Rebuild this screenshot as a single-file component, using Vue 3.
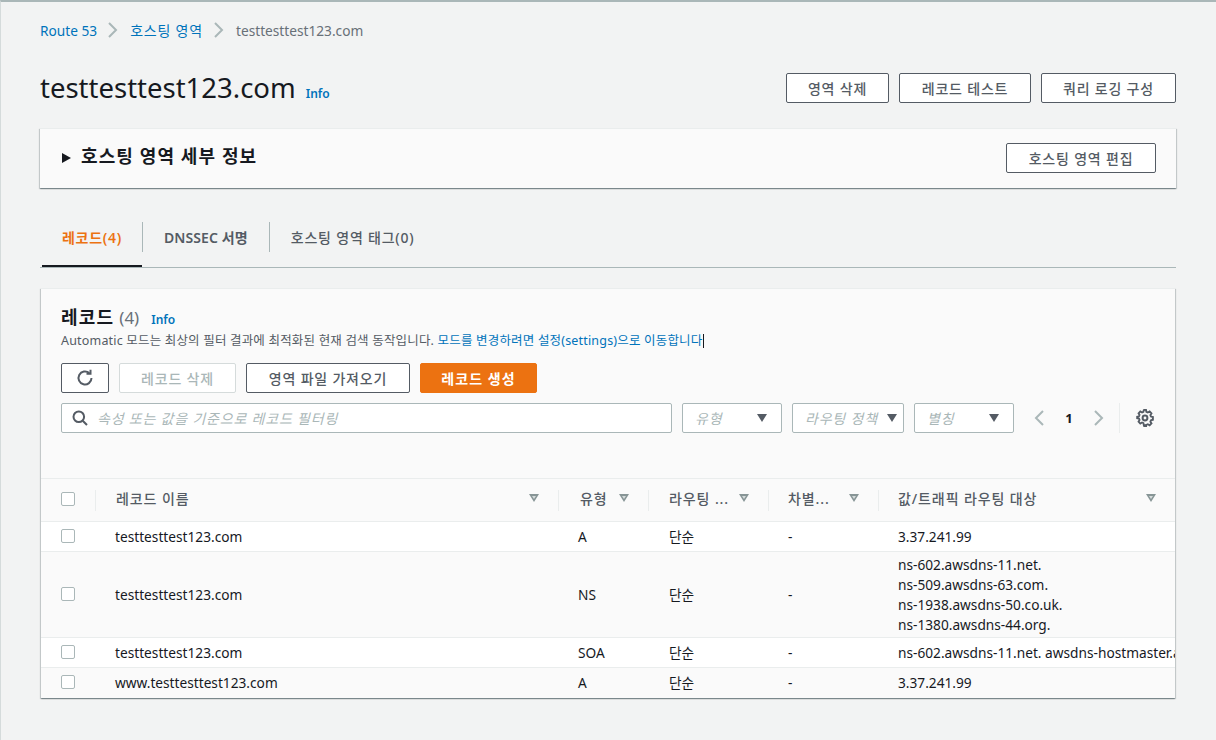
<template>
  <div class="page">
    <!-- breadcrumb -->
    <nav class="crumbs">
      <a>Route 53</a>
      <svg class="crumb-sep" width="12" height="16" viewBox="0 0 12 16"><path d="M2 1l7 7-7 7" /></svg>
      <a class="kr">호스팅 영역</a>
      <svg class="crumb-sep" width="12" height="16" viewBox="0 0 12 16"><path d="M2 1l7 7-7 7" /></svg>
      <span>testtesttest123.com</span>
    </nav>

    <!-- title and top actions -->
    <header class="head">
      <div class="head-title">
        <h1>testtesttest123.com</h1>
        <a class="info">Info</a>
      </div>
      <div class="head-actions">
        <button class="btn w-103">영역 삭제</button>
        <button class="btn w-132">레코드 테스트</button>
        <button class="btn w-135">쿼리 로깅 구성</button>
      </div>
    </header>

    <section class="details">
      <div class="details-title">
        <span class="caret"></span>
        <h2>호스팅 영역 세부 정보</h2>
      </div>
      <button class="btn w-150">호스팅 영역 편집</button>
    </section>

    <!-- tabs -->
    <div class="tabs">
      <div v-for="(tab, i) in tabs" :key="tab" class="tab" :class="{ active: i === 0 }">
        <span class="tab-label">{{ tab }}</span>
      </div>
    </div>

    <!-- records -->
    <section class="records">
      <div class="records-head">
        <div class="records-title">
          <h2>레코드</h2>
          <span class="count">(4)</span>
          <a class="info">Info</a>
        </div>
        <p class="hint">
          Automatic 모드는 최상의 필터 결과에 최적화된 현재 검색 동작입니다.
          <a>모드를 변경하려면 설정(settings)으로 이동합니다</a><span class="cursor"></span>
        </p>
        <div class="toolbar">
          <button class="btn icon-btn" aria-label="refresh">
            <svg width="18" height="18" viewBox="0 0 18 18"><path d="M15.5 9a6.5 6.5 0 1 1-2.2-4.9" /><path d="M14.5 0.8v4h-4" /></svg>
          </button>
          <button class="btn disabled w-117">레코드 삭제</button>
          <button class="btn w-164">영역 파일 가져오기</button>
          <button class="btn primary w-117">레코드 생성</button>
        </div>
        <div class="filters">
          <div class="search">
            <svg width="16" height="16" viewBox="0 0 16 16"><circle cx="6.8" cy="6.8" r="5.3" /><path d="M10.7 10.7L15 15" /></svg>
            <span>속성 또는 값을 기준으로 레코드 필터링</span>
          </div>
          <div v-for="s in selects" :key="s.label" class="select" :class="s.cls">
            <span>{{ s.label }}</span><i class="down"></i>
          </div>
          <div class="pager">
            <svg width="12" height="16" viewBox="0 0 12 16"><path d="M10 1L3 8l7 7" /></svg>
            <b>1</b>
            <svg width="12" height="16" viewBox="0 0 12 16"><path d="M2 1l7 7-7 7" /></svg>
          </div>
          <div class="prefs">
            <svg width="18" height="18" viewBox="0 0 18 18">
              <circle cx="9" cy="9" r="2.4" />
              <path d="M7.6 1.5h2.8l.4 2.1 1.5.7 1.9-1.1 1.9 2-1.1 1.8.6 1.5 2 .5v2.8l-2 .5-.6 1.5 1.1 1.8-1.9 2-1.9-1.1-1.5.7-.4 2.1H7.6" transform="translate(0 -.6) scale(.96)" />
              <path d="M10.4 16.5H7.6l-.4-2.1-1.5-.7-1.9 1.1-1.9-2 1.1-1.8-.6-1.5-2-.5V7.5l2-.5.6-1.5-1.1-1.8 1.9-2 1.9 1.1 1.5-.7.4-2.1" transform="translate(.8 .9) scale(.92)" />
            </svg>
          </div>
        </div>
      </div>

      <table class="grid">
        <colgroup>
          <col style="width: 55px" />
          <col style="width: 462px" />
          <col style="width: 90px" />
          <col style="width: 120px" />
          <col style="width: 110px" />
          <col />
        </colgroup>
        <thead>
          <tr>
            <th><span class="check"></span></th>
            <th v-for="c in columns" :key="c">
              <div class="th-in"><span>{{ c }}</span><i class="sort"></i></div>
            </th>
          </tr>
        </thead>
        <tbody>
          <tr v-for="(r, i) in rows" :key="i">
            <td><span class="check"></span></td>
            <td class="name">{{ r.name }}</td>
            <td>{{ r.type }}</td>
            <td class="route">단순</td>
            <td>-</td>
            <td class="value"><div class="value-list"><div v-for="v in r.values" :key="v">{{ v }}</div></div></td>
          </tr>
        </tbody>
      </table>
    </section>
  </div>
</template>

<script setup>
const tabs = ['레코드(4)', 'DNSSEC 서명', '호스팅 영역 태그(0)']

const selects = [
  { label: '유형', cls: 'sel-100' },
  { label: '라우팅 정책', cls: 'sel-112' },
  { label: '별칭', cls: 'sel-100' }
]

const columns = ['레코드 이름', '유형', '라우팅 ...', '차별...', '값/트래픽 라우팅 대상']

const rows = [
  { name: 'testtesttest123.com', type: 'A', values: ['3.37.241.99'] },
  {
    name: 'testtesttest123.com',
    type: 'NS',
    values: ['ns-602.awsdns-11.net.', 'ns-509.awsdns-63.com.', 'ns-1938.awsdns-50.co.uk.', 'ns-1380.awsdns-44.org.']
  },
  { name: 'testtesttest123.com', type: 'SOA', values: ['ns-602.awsdns-11.net. awsdns-hostmaster.amazon.com. 1 7200 900'] },
  { name: 'www.testtesttest123.com', type: 'A', values: ['3.37.241.99'] }
]
</script>

<style>
html, body {
  margin: 0;
  background: #f2f3f3;
}
</style>

<style scoped>
.page {
  box-sizing: border-box;
  width: 1216px;
  height: 740px;
  overflow: hidden;
  padding: 0 40px;
  background: #f2f3f3;
  border-top: 2px solid #aab7b8;
  border-left: 1px solid #d5dbdb;
  font-family: "Noto Sans", "Noto Sans CJK KR", sans-serif;
  font-size: 13.7px;
  color: #16191f;
}

h1, h2, p {
  margin: 0;
}

a {
  color: #0073bb;
}

.kr {
  font-size: 14px;
  letter-spacing: 0.8px;
}

.crumbs {
  display: flex;
  align-items: center;
  height: 20px;
  margin: 18px 0 0 -1px;
  color: #687078;
}

.crumb-sep {
  margin: 0 11px 0 10px;
}

.crumb-sep path, .pager path {
  fill: none;
  stroke: #aab7b8;
  stroke-width: 2;
}

.head {
  display: flex;
  justify-content: space-between;
  align-items: center;
  height: 30px;
  margin: 33px 0 0 -1px;
}

.head-title {
  display: flex;
  align-items: center;
  gap: 10px;
}

h1 {
  font-size: 27.5px;
  font-weight: 400;
  line-height: 30px;
}

.info {
  font-size: 12px;
  font-weight: 600;
}

.head-title .info {
  margin-top: 10px;
}

.head-actions {
  display: flex;
  gap: 10px;
}

.btn {
  box-sizing: border-box;
  height: 30px;
  padding: 0;
  background: #fff;
  border: 1px solid #545b64;
  border-radius: 2px;
  font-family: inherit;
  font-size: 14px;
  letter-spacing: 0.8px;
  font-weight: 500;
  color: #545b64;
}

.w-103 { width: 103px; }
.w-132 { width: 132px; }
.w-135 { width: 135px; }
.w-150 { width: 150px; }
.w-117 { width: 117px; }
.w-164 { width: 164px; }

.details {
  box-sizing: border-box;
  display: flex;
  justify-content: space-between;
  align-items: center;
  height: 60px;
  margin: 25px 0 0 -1px;
  padding: 0 20px 2px 22px;
  background: #fafafa;
  border-top: 1px solid #eaeded;
  box-shadow: 0 1px 1px 0 rgba(0, 28, 36, 0.3), 1px 1px 1px 0 rgba(0, 28, 36, 0.15), -1px 1px 1px 0 rgba(0, 28, 36, 0.15);
}

.details-title {
  display: flex;
  align-items: center;
  gap: 10px;
}

.details-title h2 {
  font-size: 18px;
  font-weight: 700;
  line-height: 24px;
  letter-spacing: 1.1px;
  margin-bottom: 3px;
}

.caret {
  width: 0;
  height: 0;
  border-left: 9px solid #16191f;
  border-top: 5.5px solid transparent;
  border-bottom: 5.5px solid transparent;
}

.tabs {
  display: flex;
  height: 58px;
  margin: 21px 0 0 -1px;
  padding-left: 2px;
  border-bottom: 1px solid #aab7b8;
}

.tab {
  display: flex;
  align-items: center;
  padding: 0 20px 2px;
  box-sizing: border-box;
  height: 57px;
  position: relative;
  font-weight: 600;
  font-size: 14px;
  letter-spacing: 0.7px;
  color: #545b64;
}

.tab + .tab::before {
  content: "";
  position: absolute;
  left: 0;
  top: 13px;
  height: 30px;
  width: 1px;
  background: #aab7b8;
}

.tab:nth-child(2) {
  padding: 0 21px 2px 22px;
  letter-spacing: 0.1px;
}

.tab:nth-child(3) {
  padding: 0 20px 2px 22px;
  font-weight: 500;
  letter-spacing: 0.8px;
}

.tab.active {
  color: #ec7211;
  box-shadow: inset 0 -2px 0 #16191f;
  height: 58px;
  padding-bottom: 3px;
}

.records {
  margin: 20px 1px 0 0;
  height: 409px;
  overflow: hidden;
  background: #fafafa;
  border-top: 1px solid #eaeded;
  box-shadow: 0 1px 1px 0 rgba(0, 28, 36, 0.3), 1px 1px 1px 0 rgba(0, 28, 36, 0.15), -1px 1px 1px 0 rgba(0, 28, 36, 0.15);
}

.records-head {
  box-sizing: border-box;
  height: 190px;
  padding: 16px 20px 0;
  border-bottom: 1px solid #eaeded;
}

.records-title {
  display: flex;
  align-items: baseline;
  height: 24px;
}

.records-title h2 {
  font-size: 18px;
  font-weight: 700;
  line-height: 24px;
  letter-spacing: 1.2px;
}

.count {
  margin-left: 5px;
  font-size: 17px;
  color: #687078;
}

.records-title .info {
  margin-left: 12px;
}

.hint {
  margin-top: 4px;
  font-size: 12.5px;
  letter-spacing: 0.18px;
  line-height: 16px;
  color: #545b64;
  white-space: nowrap;
}

.cursor {
  display: inline-block;
  width: 1px;
  height: 14px;
  margin-left: 1px;
  vertical-align: -3px;
  background: #16191f;
}

.toolbar {
  display: flex;
  gap: 10px;
  margin-top: 14px;
}

.icon-btn {
  width: 48px;
  display: flex;
  align-items: center;
  justify-content: center;
}

.icon-btn path {
  fill: none;
  stroke: #545b64;
  stroke-width: 2;
}

.btn.disabled {
  border-color: #d5dbdb;
  color: #aab7b8;
}

.btn.primary {
  background: #ec7211;
  border-color: #ec7211;
  color: #fff;
  font-weight: 700;
  letter-spacing: 1.1px;
}

.filters {
  display: flex;
  align-items: center;
  margin-top: 10px;
}

.search, .select {
  box-sizing: border-box;
  display: flex;
  align-items: center;
  height: 30px;
  background: #fff;
  border: 1px solid #aab7b8;
  border-radius: 2px;
  color: #aab7b8;
  font-style: italic;
  font-size: 14px;
  letter-spacing: 0.8px;
}

.search {
  width: 611px;
  padding-left: 10px;
  gap: 9px;
}

.search svg {
  fill: none;
  stroke: #545b64;
  stroke-width: 2;
}

.select {
  justify-content: space-between;
  padding: 0 9px 0 12px;
  margin-left: 10px;
}

.sel-100 { width: 100px; padding-right: 14px; }
.sel-112 { width: 112px; padding-right: 6px; }

.down {
  width: 0;
  height: 0;
  border-left: 5.5px solid transparent;
  border-right: 5.5px solid transparent;
  border-top: 8px solid #545b64;
}

.pager {
  display: flex;
  align-items: center;
  width: 105px;
  justify-content: space-between;
  box-sizing: border-box;
  padding: 0 14px 0 19px;
  color: #16191f;
  font-size: 13px;
}

.prefs {
  display: flex;
  align-items: center;
  height: 30px;
  padding-left: 16px;
  border-left: 1px solid #eaeded;
}

.prefs svg {
  fill: none;
  stroke: #545b64;
  stroke-width: 2;
}

.grid {
  width: 100%;
  border-collapse: collapse;
  table-layout: fixed;
}

th {
  height: 42px;
  padding: 0;
  font-weight: 500;
  font-size: 14px;
  letter-spacing: 0.9px;
  color: #545b64;
  text-align: left;
  position: relative;
}

th + th::before {
  content: "";
  position: absolute;
  left: 0;
  top: 11px;
  height: 21px;
  width: 1px;
  background: #eaeded;
}

th:nth-child(2)::before {
  left: -1px;
}

thead tr {
  border-bottom: 1px solid #eaeded;
}

.th-in {
  display: flex;
  justify-content: space-between;
  align-items: center;
  padding: 0 19px 4px 20px;
}

th:nth-child(3) .th-in { padding-left: 22px; }
th:nth-child(4) .th-in { padding-left: 21px; }

.sort {
  width: 0;
  height: 0;
  border-left: 5px solid transparent;
  border-right: 5px solid transparent;
  border-top: 8px solid #879596;
  position: relative;
}

.sort::after {
  content: "";
  position: absolute;
  left: -2px;
  top: -6px;
  border-left: 2px solid transparent;
  border-right: 2px solid transparent;
  border-top: 3px solid #d5dbdb;
}

.check {
  display: block;
  box-sizing: border-box;
  width: 14px;
  height: 14px;
  margin-left: 20px;
  margin-bottom: 2px;
  background: #fff;
  border: 1px solid #aab7b8;
  border-radius: 2px;
}

td {
  height: 29px;
  padding: 0 20px;
  line-height: 20px;
  white-space: nowrap;
  overflow: hidden;
  color: #16191f;
}

td:first-child {
  padding: 0;
}

td.name {
  padding-left: 19px;
}

td.route {
  padding-left: 21px;
}

tbody tr {
  background: #fff;
  border-bottom: 1px solid #eaeded;
}

tbody tr:nth-child(even) {
  background: #fafafa;
}

tbody tr:last-child {
  border-bottom: none;
}

.value {
  padding-right: 0;
}

.value-list {
  padding: 3px 0 2px;
}
</style>
